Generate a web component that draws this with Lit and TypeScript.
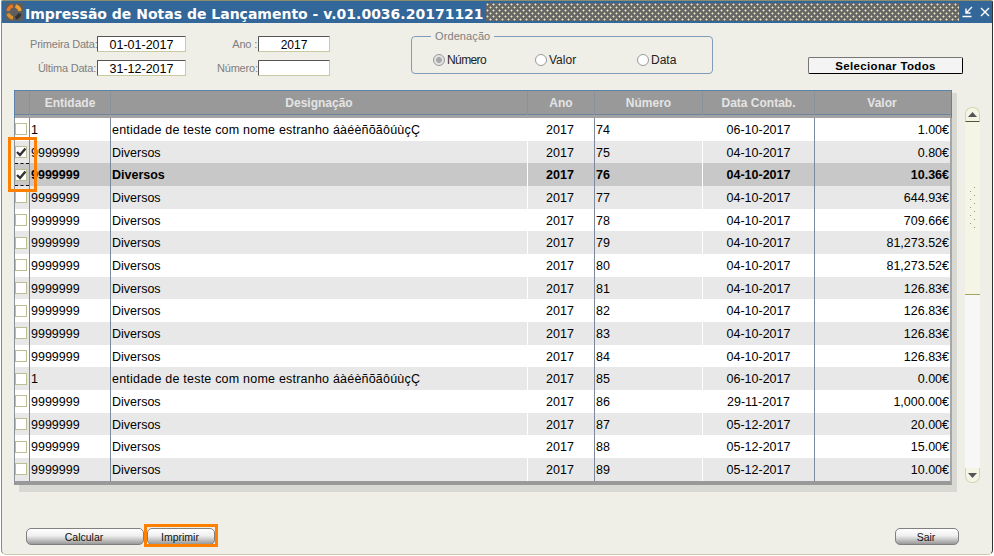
import { LitElement, html, css } from 'lit';
import { customElement } from 'lit/decorators.js';
import { classMap } from 'lit/directives/class-map.js';

type Row = { ent: string; des: string; num: number; date: string; val: string; checked?: boolean; sel?: boolean };

const ODD = 'entidade de teste com nome estranho áàéèñõãôúùçÇ';
const DIV = 'Diversos';

const ROWS: Row[] = [
    { ent: '1', des: ODD, num: 74, date: '06-10-2017', val: '1.00€' },
    { ent: '9999999', des: DIV, num: 75, date: '04-10-2017', val: '0.80€', checked: true },
    { ent: '9999999', des: DIV, num: 76, date: '04-10-2017', val: '10.36€', checked: true, sel: true },
    { ent: '9999999', des: DIV, num: 77, date: '04-10-2017', val: '644.93€' },
    { ent: '9999999', des: DIV, num: 78, date: '04-10-2017', val: '709.66€' },
    { ent: '9999999', des: DIV, num: 79, date: '04-10-2017', val: '81,273.52€' },
    { ent: '9999999', des: DIV, num: 80, date: '04-10-2017', val: '81,273.52€' },
    { ent: '9999999', des: DIV, num: 81, date: '04-10-2017', val: '126.83€' },
    { ent: '9999999', des: DIV, num: 82, date: '04-10-2017', val: '126.83€' },
    { ent: '9999999', des: DIV, num: 83, date: '04-10-2017', val: '126.83€' },
    { ent: '9999999', des: DIV, num: 84, date: '04-10-2017', val: '126.83€' },
    { ent: '1', des: ODD, num: 85, date: '06-10-2017', val: '0.00€' },
    { ent: '9999999', des: DIV, num: 86, date: '29-11-2017', val: '1,000.00€' },
    { ent: '9999999', des: DIV, num: 87, date: '05-12-2017', val: '20.00€' },
    { ent: '9999999', des: DIV, num: 88, date: '05-12-2017', val: '15.00€' },
    { ent: '9999999', des: DIV, num: 89, date: '05-12-2017', val: '10.00€' },
];

@customElement('app-root')
export class AppRoot extends LitElement {
    static styles = css`
        :host {
            display: block;
            width: 994px;
            height: 556px;
            background: #fff;
            font-family: "Liberation Sans", Arial, sans-serif;
            font-size: 12.5px;
            color: #000;
            overflow: hidden;
        }

        .window {
            position: relative;
            box-sizing: border-box;
            width: 992px;
            height: 555px;
            margin-left: 1px;
            background: #efeee7;
            border: 1px solid #8e8e6c;
            border-right-color: #333;
            border-bottom-color: #c9c9b0;
            border-radius: 2px 2px 5px 5px;
        }

        .title {
            display: flex;
            align-items: center;
            height: 22px;
            background: #336699;
        }

        .logo {
            display: block;
            flex: none;
            margin-left: 3px;
        }

        .title h1 {
            flex: none;
            width: 461px;
            margin: 3px 0 0 2px;
            font: bold 14px "DejaVu Sans", sans-serif;
            color: #fff;
            white-space: nowrap;
        }

        .dots {
            flex: none;
            width: 473px;
            height: 18px;
            background-color: #666;
            background-image:
                radial-gradient(circle at 1.5px 1.5px, #e9e9c4 0.9px, transparent 1.1px),
                radial-gradient(circle at 4.5px 4.5px, #e9e9c4 0.9px, transparent 1.1px);
            background-size: 6px 6px;
        }

        .win-btns {
            display: flex;
            align-items: center;
            gap: 5px;
            margin-left: 3px;
        }

        .win-btns svg {
            display: block;
        }

        .form {
            display: flex;
            align-items: flex-start;
            height: 67px;
            box-sizing: border-box;
            padding: 13px 0 0 28px;
        }

        .fields {
            display: grid;
            row-gap: 8px;
            align-items: center;
        }

        .fields.dates {
            grid-template-columns: 67px 89px;
        }

        .fields.extra {
            grid-template-columns: 41px 72px;
            margin-left: 31px;
        }

        .lbl {
            font-size: 11px;
            letter-spacing: -0.2px;
            color: #808080;
            text-align: right;
            padding-right: 1px;
            white-space: nowrap;
        }

        .input {
            box-sizing: border-box;
            height: 16px;
            line-height: 16px;
            background: #fff;
            border: 1px solid #c9c9a4;
            border-top-color: #555;
            border-left-color: #555;
            border-radius: 1px;
            text-align: center;
        }

        .input.small {
            font-size: 12px;
        }

        fieldset {
            box-sizing: border-box;
            flex: none;
            display: flex;
            align-items: center;
            width: 302px;
            height: 42px;
            margin: -4px 0 0 81px;
            padding: 6px 0 0 21px;
            border: 1px solid #7f9db9;
            border-radius: 4px;
        }

        legend {
            margin-left: -2px;
            padding: 0 4px;
            font-size: 11px;
            line-height: 9px;
            letter-spacing: 0.1px;
            color: #808080;
        }

        .radio {
            display: flex;
            align-items: center;
            gap: 2px;
            width: 102px;
            font-size: 12px;
            color: #222;
        }

        .radio:last-child {
            width: auto;
        }

        .radio.on {
            letter-spacing: -0.6px;
        }

        .radio i {
            box-sizing: border-box;
            display: block;
            width: 12px;
            height: 12px;
            background: #fff;
            border: 1px solid #999;
            border-radius: 50%;
        }

        .radio.on i {
            background: radial-gradient(circle, #a8a8a8 0 2.6px, #e2e2e2 3.2px);
        }

        .select-all {
            box-sizing: border-box;
            flex: none;
            width: 155px;
            height: 17px;
            margin: 21px 0 0 95px;
            background: #f4f4f4;
            border: 1px solid #777;
            border-right-color: #000;
            border-bottom-color: #000;
            border-radius: 2px;
            font-size: 11.5px;
            font-weight: bold;
            line-height: 16px;
            letter-spacing: 0.35px;
            text-align: center;
        }

        .main {
            display: flex;
            align-items: flex-start;
            padding-left: 12px;
        }

        .table {
            width: 938px;
            box-shadow: 5px 3px 0 #d8d9d3, 5px 7px 0 #d8d9d3;
        }

        .head {
            display: grid;
            grid-template-columns: 14px 81px 417px 67px 108px 112px 137px;
            box-sizing: border-box;
            height: 28px;
            background: #999;
            border: 1px solid #5a82aa;
            border-width: 1px 1px 0;
            box-shadow: inset 0 -3px 0 #a2a2a2, inset 0 -4px 0 #6d84a0;
        }

        .head > div {
            box-sizing: border-box;
            height: 24px;
            line-height: 25px;
            font-size: 12px;
            font-weight: bold;
            color: #e4e4e4;
            text-align: center;
            border-left: 1px solid #8b929c;
        }

        .head > div:first-child {
            border-left: 0;
        }

        .head > div:last-child {
            padding-right: 2px;
        }

        .body {
            border-left: 1px solid #8a929c;
            border-right: 2px solid #a6a6a6;
            border-bottom: 4px solid #999;
            box-sizing: border-box;
        }

        .row {
            display: grid;
            grid-template-columns: 14px 81px 417px 67px 108px 112px 136px;
            height: calc(68px / 3);
            line-height: 24px;
            background: #fff;
            white-space: nowrap;
        }

        .row.alt {
            background: #e8e8e8;
        }

        .row.sel {
            background: #c8c8c8;
            font-weight: bold;
        }

        .row > div {
            box-sizing: border-box;
            overflow: hidden;
        }

        .row .check {
            display: flex;
            align-items: center;
            justify-content: center;
            padding-right: 2px;
        }

        .row.sel .check {
            border-top: 1px dashed #111;
            border-bottom: 1px dashed #111;
        }

        .box {
            box-sizing: border-box;
            width: 12px;
            height: 12px;
            background: #fff;
            border: 1px solid #bdbd94;
        }

        .box svg {
            display: block;
        }

        .ln {
            border-left: 1px solid #7d8a9e;
        }

        .wl {
            border-left: 1px solid #fff;
        }

        .l {
            padding-left: 1px;
        }

        .long {
            letter-spacing: 0.21px;
        }

        .c {
            text-align: center;
        }

        .yr {
            padding-right: 2px;
        }

        .r {
            text-align: right;
            padding-right: 1px;
        }

        .scroll {
            display: flex;
            flex-direction: column;
            box-sizing: border-box;
            width: 15px;
            height: 376px;
            margin: 17px 0 0 13px;
        }

        .sb-btn {
            flex: none;
            display: flex;
            align-items: center;
            justify-content: center;
            box-sizing: border-box;
            height: 15px;
            background: #f5f5e6;
            border: 1px solid #d5d5b4;
        }

        .sb-btn.up {
            border-bottom: 1px solid #55553a;
            border-radius: 7px 7px 0 0;
        }

        .sb-btn.down {
            border-top: 0;
            border-radius: 0 0 7px 7px;
        }

        .thumb {
            flex: none;
            display: flex;
            align-items: center;
            justify-content: center;
            box-sizing: border-box;
            height: 173px;
            background: #f5f5e6;
            border-bottom: 1px solid #a5a55e;
        }

        .track {
            flex: 1;
            background: #f7f7f7;
        }

        .footer {
            display: flex;
            align-items: center;
            height: 17px;
            margin-top: 43px;
            padding-left: 24px;
        }

        .btn {
            box-sizing: border-box;
            height: 17px;
            padding-right: 2px;
            border: 1px solid #808080;
            border-radius: 5px;
            background: linear-gradient(#fff 0, #efefef 45%, #999 100%);
            font-size: 10.5px;
            line-height: 17px;
            text-align: center;
            color: #111;
        }

        .btn.calc {
            width: 118px;
        }

        .btn.print {
            width: 68px;
            margin-left: 3px;
        }

        .btn.exit {
            width: 64px;
            margin-left: 680px;
        }

        .mark {
            position: absolute;
            box-sizing: border-box;
            border: 3px solid #ff8000;
        }

        .mark.checks {
            left: 6px;
            top: 136px;
            width: 29px;
            height: 55px;
        }

        .mark.button {
            left: 142px;
            top: 523px;
            width: 74px;
            height: 23px;
        }
    `;

    _row(r: Row, i: number) {
        const classes = { row: true, alt: i % 2 === 1 || i === 3, sel: !!r.sel };
        return html`
            <div class=${classMap(classes)}>
                <div class="check">
                    <div class="box">
                        ${r.checked ? html`
                            <svg width="10" height="10" viewBox="0 0 10 10">
                                <path d="M1 5 L4 8 L9.5 1.5" fill="none" stroke="#333" stroke-width="2.4"/>
                            </svg>` : ''}
                    </div>
                </div>
                <div class="ln l">${r.ent}</div>
                <div class=${classMap({ ln: true, l: true, long: r.des === ODD })}>${r.des}</div>
                <div class="wl c yr">2017</div>
                <div class="ln l">${r.num}</div>
                <div class="wl c">${r.date}</div>
                <div class="ln r">${r.val}</div>
            </div>
        `;
    }

    render() {
        return html`
            <div class="window">
                <div class="title">
                    <svg class="logo" width="18" height="18" viewBox="0 0 18 18">
                        <rect width="18" height="18" fill="#5e5e5e"/>
                        <path d="M3 8 A6.5 6.5 0 0 1 8 2.8" fill="none" stroke="#e8772a" stroke-width="3.4"/>
                        <path d="M10.5 3 A6.5 6.5 0 0 1 15 8" fill="none" stroke="#f0a030" stroke-width="3.4"/>
                        <path d="M3 10.5 A6.5 6.5 0 0 0 8 15" fill="none" stroke="#d9902a" stroke-width="3.4"/>
                        <path d="M10.5 15 A6.5 6.5 0 0 0 15 10.5" fill="none" stroke="#333" stroke-width="3.4"/>
                    </svg>
                    <h1>Impressão de Notas de Lançamento - v.01.0036.20171121</h1>
                    <div class="dots"></div>
                    <div class="win-btns">
                        <svg width="12" height="12" viewBox="0 0 12 12">
                            <path d="M10 1 L4 7 M4 2.5 V7 H8.5 M0.5 10.5 H9.5" fill="none" stroke="#fff" stroke-width="1.4"/>
                        </svg>
                        <svg width="12" height="12" viewBox="0 0 12 12">
                            <path d="M2 2 L10 10 M10 2 L2 10" fill="none" stroke="#fff" stroke-width="1.4"/>
                        </svg>
                    </div>
                </div>

                <div class="form">
                    <div class="fields dates">
                        <div class="lbl">Primeira Data:</div>
                        <div class="input">01-01-2017</div>
                        <div class="lbl">Última Data:</div>
                        <div class="input">31-12-2017</div>
                    </div>
                    <div class="fields extra">
                        <div class="lbl">Ano :</div>
                        <div class="input small">2017</div>
                        <div class="lbl">Número:</div>
                        <div class="input"></div>
                    </div>
                    <fieldset>
                        <legend>Ordenação</legend>
                        <div class="radio on"><i></i>Número</div>
                        <div class="radio"><i></i>Valor</div>
                        <div class="radio"><i></i>Data</div>
                    </fieldset>
                    <div class="select-all">Selecionar Todos</div>
                </div>

                <div class="main">
                    <div class="table">
                        <div class="head">
                            <div></div>
                            <div>Entidade</div>
                            <div>Designação</div>
                            <div>Ano</div>
                            <div>Número</div>
                            <div>Data Contab.</div>
                            <div>Valor</div>
                        </div>
                        <div class="body">${ROWS.map((r, i) => this._row(r, i))}</div>
                    </div>
                    <div class="scroll">
                        <div class="sb-btn up">
                            <svg width="9" height="5" viewBox="0 0 9 5"><path d="M4.5 0 L9 5 H0 Z" fill="#555"/></svg>
                        </div>
                        <div class="thumb">
                            <svg width="9" height="42" viewBox="0 0 9 42">
                                <path d="M6 1 l1 -1 M2 5 l1 -1 M6 9 l1 -1 M2 13 l1 -1 M6 17 l1 -1 M2 21 l1 -1 M6 25 l1 -1 M2 29 l1 -1 M6 33 l1 -1 M2 37 l1 -1 M6 41 l1 -1" stroke="#9a9a80" stroke-width="1" fill="none"/>
                            </svg>
                        </div>
                        <div class="track"></div>
                        <div class="sb-btn down">
                            <svg width="9" height="5" viewBox="0 0 9 5"><path d="M0 0 H9 L4.5 5 Z" fill="#555"/></svg>
                        </div>
                    </div>
                </div>

                <div class="footer">
                    <div class="btn calc">Calcular</div>
                    <div class="btn print">Imprimir</div>
                    <div class="btn exit">Sair</div>
                </div>

                <div class="mark checks"></div>
                <div class="mark button"></div>
            </div>
        `;
    }
}
